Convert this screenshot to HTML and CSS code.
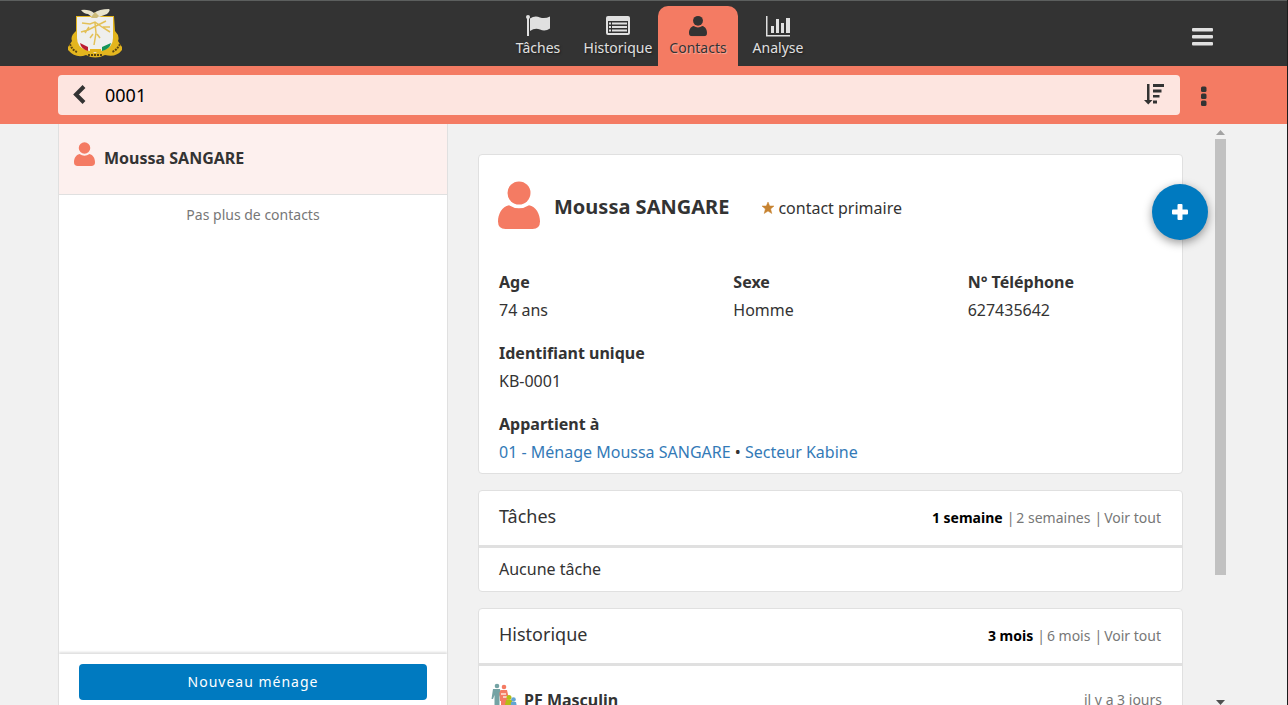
FILE: index.html
```html
<!DOCTYPE html>
<html lang="fr">
<head>
<meta charset="utf-8">
<title>Contacts</title>
<link rel="stylesheet" href="styles.css">
</head>
<body>
<svg class="defs" aria-hidden="true">
  <symbol id="person" viewBox="0 0 42 48">
    <circle cx="21" cy="12" r="11.5"/>
    <path d="M11 24.2Q21 30.5 31 24.2C38 25.5 42 33 42 40.500Q42 48 34.500 48H7.500Q0 48 0 40.500C0 33 4 25.500 11 24.200Z"/>
  </symbol>
</svg>
<header class="topbar">
  <div class="container topbar-inner">
    <a class="logo" href="#" aria-label="Accueil">
      <svg width="56" height="50" viewBox="0 0 56 50">
        <path d="M8 22Q2 27 4 32L0 38V41Q8 50 18 46Q27 51 37 46Q48 49 54 41V38L50 32Q52 27 47 22L46 7H8Z" fill="#e3b51e"/>
        <path d="M9 8H45V29Q45 38 36 41Q30 42 27 44Q24 42 18 41Q9 38 9 29Z" fill="#efefed"/>
        <path d="M13 1Q21 0 26 4Q31 0 41 0Q43 1 39 5L31 8H24L20 5Q16 5 13 1Z" fill="#e8e3cc"/>
        <path d="M24 7L27 3L31 7L29 9H23Z" fill="#cdbb79"/>
        <path d="M14 14L22 15L27 13L34 18L42 23M38 12L30 16L20 21L13 23M27 14L28 24L26 36M35 18L42 18M21 18L17 24M29 25L32 29M25 25L22 29" fill="none" stroke="#e3c057" stroke-width="1.500"/>
        <path d="M12 34L20 38V42Q13 40 12 34Z" fill="#bb1b31"/>
        <path d="M22 40H33V43H22Z" fill="#e5b31b"/>
        <path d="M34 38L43 34Q42 40 34 42Z" fill="#149458"/>
        <path d="M2 35Q4 41 9 43M52 35Q49 41 44 43M20 46H35" fill="none" stroke="#5b4611" stroke-width="2" stroke-dasharray="2 1"/>
      </svg>
    </a>
    <nav class="tabs">
      <a class="tab" href="#">
        <svg width="26" height="22" viewBox="0 0 26 22" fill="currentColor"><circle cx="3" cy="2" r="2"/><path d="M2 2H4V21H2ZM5 3.500Q10 0 15 2.500Q20 4 25 1.500V13.500Q20 17 15 14.500Q10 12.500 5 16Z"/></svg>
        <span>Tâches</span>
      </a>
      <a class="tab" href="#">
        <svg width="26" height="22" viewBox="0 0 26 22" fill="currentColor"><path fill-rule="evenodd" d="M3 1H23Q25 1 25 3V18Q25 20 23 20H3Q1 20 1 18V3Q1 1 3 1ZM3 6V18H23V6Z"/><path d="M4 7.500h2v2H4zM7 7.500h15v2H7zM4 11h2v2H4zM7 11h15v2H7zM4 14.500h2v2H4zM7 14.500h15v2H7z"/></svg>
        <span>Historique</span>
      </a>
      <a class="tab tab-active" href="#" aria-current="page">
        <svg width="18" height="22" viewBox="0 0 42 48" fill="currentColor"><use href="#person"/></svg>
        <span>Contacts</span>
      </a>
      <a class="tab" href="#">
        <svg width="26" height="22" viewBox="0 0 26 22" fill="currentColor"><path d="M1 1H2.500V20H25V21.500H1ZM6 11H9V18H6ZM11 4H14V18H11ZM16 8H19V18H16ZM21 3H25V18H21Z"/></svg>
        <span>Analyse</span>
      </a>
    </nav>
    <button class="icon-button menu" aria-label="Menu">
      <svg width="21" height="19" viewBox="0 0 21 19" fill="currentColor"><rect y="1" width="21" height="3.500" rx="1"/><rect y="8" width="21" height="3.500" rx="1"/><rect y="15" width="21" height="3.500" rx="1"/></svg>
    </button>
  </div>
</header>
<div class="searchbar">
  <div class="container search-inner">
    <form class="search">
      <button class="icon-button" type="button" aria-label="Retour">
        <svg width="14" height="20" viewBox="0 0 14 20"><path d="M11 1.500L3 9.500L11 17.500" fill="none" stroke="currentColor" stroke-width="4"/></svg>
      </button>
      <input class="search-input" type="text" value="0001" aria-label="Rechercher">
      <button class="icon-button" type="button" aria-label="Trier">
        <svg width="20" height="22" viewBox="0 0 20 22" fill="currentColor"><path d="M3 0H5.500V16H8.500L4.250 20.500L0 16H3ZM9 0H20V3H9ZM9 5.500H17.500V8.500H9ZM9 11H15.500V13.500H9ZM9 16.500H13V19.500H9Z"/></svg>
      </button>
    </form>
    <button class="icon-button kebab" aria-label="Plus d'options">
      <svg width="6" height="20" viewBox="0 0 6 20" fill="currentColor"><rect y="0.500" width="5.500" height="5.500" rx="1.500"/><rect y="7.500" width="5.500" height="5.500" rx="1.500"/><rect y="14.500" width="5.500" height="5.500" rx="1.500"/></svg>
    </button>
  </div>
</div>
<main class="container content">
  <aside class="sidebar">
    <a class="contact-row" href="#">
      <svg width="21" height="24" fill="#f47b63"><use href="#person"/></svg>
      <span>Moussa SANGARE</span>
    </a>
    <p class="no-more">Pas plus de contacts</p>
    <div class="sidebar-footer"><button class="primary-button">Nouveau ménage</button></div>
  </aside>
  <section class="detail">
    <div class="detail-scroll">
      <article class="card">
        <div class="profile">
          <svg width="42" height="48" fill="#f47b63"><use href="#person"/></svg>
          <h1>Moussa SANGARE</h1>
          <div class="primary-contact">
            <svg width="12" height="12" viewBox="0 0 12 12"><path d="M6 0L7.700 4H12L8.600 6.900L9.800 11.500L6 9L2.200 11.500L3.400 6.900L0 4H4.300Z" fill="#c78330" stroke="#c78330" stroke-width="0.500"/></svg>
            <span>contact primaire</span>
          </div>
        </div>
        <dl class="fields">
          <div><dt>Age</dt><dd>74 ans</dd></div>
          <div><dt>Sexe</dt><dd>Homme</dd></div>
          <div><dt>N° Téléphone</dt><dd>627435642</dd></div>
          <div class="wide"><dt>Identifiant unique</dt><dd>KB-0001</dd></div>
          <div class="wide"><dt>Appartient à</dt><dd><a href="#">01 - Ménage Moussa SANGARE</a> • <a href="#">Secteur Kabine</a></dd></div>
        </dl>
      </article>
      <article class="card">
        <div class="card-header">
          <h2>Tâches</h2>
          <div class="filters"><a class="selected" href="#">1 semaine</a><a href="#">2 semaines</a><a href="#">Voir tout</a></div>
        </div>
        <p class="empty">Aucune tâche</p>
      </article>
      <article class="card">
        <div class="card-header">
          <h2>Historique</h2>
          <div class="filters"><a class="selected" href="#">3 mois</a><a href="#">6 mois</a><a href="#">Voir tout</a></div>
        </div>
        <a class="report" href="#">
          <svg width="26" height="28" viewBox="0 0 26 28">
            <g fill="#74a3a4"><circle cx="6" cy="3" r="2.300"/><path d="M2 6H9L11 16H9.500L8.500 12V28H3.500V12L2 16H0.500Z"/></g>
            <g fill="#f47b63"><circle cx="13" cy="4" r="2.300"/><path d="M9.500 7H16L18 16L16 17V23H15V28H10V18H9L8.500 10Z"/></g>
            <path d="M10 11H15M12 14H16" stroke="#fbe7dc" stroke-width="1.500"/>
            <g fill="#b4bd16"><circle cx="18" cy="14.500" r="2.500"/><path d="M15 17H21L22 22H20V28H16V22H14Z"/></g>
            <g fill="#64a5d1"><circle cx="22.500" cy="16.500" r="2.300"/><path d="M20 19H25L26 24H24V28H21V24H19.500Z"/></g>
          </svg>
          <strong>PF Masculin</strong>
          <span>il y a 3 jours</span>
        </a>
      </article>
    </div>
    <div class="scrollbar" aria-hidden="true">
      <svg width="9" height="5" viewBox="0 0 9 5"><path d="M0 5L4.500 0L9 5Z" fill="#a3a3a3"/></svg>
      <div class="track"><div class="thumb"></div></div>
      <svg width="9" height="5" viewBox="0 0 9 5"><path d="M0 0H9L4.500 5Z" fill="#505050"/></svg>
    </div>
    <button class="fab" aria-label="Ajouter">
      <svg width="16" height="16" viewBox="0 0 16 16" fill="currentColor"><rect x="5.500" width="5" height="16" rx="1"/><rect y="5.500" width="16" height="5" rx="1"/></svg>
    </button>
  </section>
</main>
</body>
</html>
```
FILE: styles.css
```css
* { box-sizing: border-box; }
body {
  margin: 0;
  height: 100vh;
  display: flex;
  flex-direction: column;
  overflow: hidden;
  background: #f1f1f1;
  color: #333;
  font: 16px/24px "Noto Sans", sans-serif;
}
body::after {
  content: "";
  position: fixed;
  top: 0;
  right: 0;
  bottom: 0;
  width: 1px;
  background: #1c1c1c;
}
h1, h2, p, dl, dd { margin: 0; }
a { text-decoration: none; color: inherit; }
button, input { font: inherit; color: inherit; }
svg { display: block; flex: none; }
.defs { position: absolute; width: 0; height: 0; }
.container { margin: 0 60px 0 58px; }
.icon-button { border: 0; padding: 0; background: none; cursor: pointer; }

.topbar { background: #333; border-top: 1px solid #5c5f5e; }
.topbar-inner {
  display: grid;
  grid-template-columns: 1fr auto 1fr;
  align-items: center;
  height: 65px;
}
.logo { padding-left: 10px; justify-self: start; }
.tabs { display: flex; align-self: end; margin-left: 30px; }
.tab {
  display: flex;
  flex-direction: column;
  align-items: center;
  width: 80px;
  height: 60px;
  padding-top: 9px;
  gap: 1px;
  border-radius: 10px 10px 0 0;
  color: #e0e0e0;
  font-size: 14px;
  line-height: 20px;
  text-shadow: 1px 1px 2px rgba(0, 0, 0, .5);
}
.tab-active {
  background: #f47b63;
  color: #333;
  text-shadow: 1px 1px 1px rgba(255, 255, 255, .4);
}
.menu { justify-self: end; margin-right: 15px; padding-top: 6px; color: #e0e0e0; }

.searchbar { background: #f47b63; }
.search-inner { display: flex; align-items: center; height: 58px; }
.search {
  flex: 1;
  display: flex;
  align-items: center;
  height: 40px;
  padding: 0 16px 0 15px;
  border-radius: 4px;
  background: #fde5e0;
}
.search-input {
  flex: 1;
  min-width: 0;
  height: 40px;
  padding: 0 18px;
  border: 0;
  outline: 0;
  background: none;
  color: #000;
  font-size: 18px;
}
.kebab { margin: 0 21px; padding-top: 1px; }

.content { flex: 1; min-height: 0; display: grid; grid-template-columns: 1fr 2fr; }
.sidebar {
  display: flex;
  flex-direction: column;
  min-height: 0;
  background: #fff;
  border: 1px solid #e0e0e0;
  border-width: 0 1px;
}
.contact-row {
  display: flex;
  align-items: flex-start;
  gap: 9px;
  padding: 18px 15px 25px;
  border-bottom: 1px solid #e0e0e0;
  background: #fdf0ee;
  font-weight: bold;
}
.contact-row span { padding-top: 6px; line-height: 21px; }
.no-more { flex: 1; padding-top: 10px; text-align: center; color: #777; font-size: 14px; line-height: 20px; }
.sidebar-footer { padding: 10px 20px 5px; box-shadow: 0 -2px 2px #e0e0e0; }
.primary-button {
  width: 100%;
  height: 36px;
  border: 0;
  border-radius: 4px;
  background: #007ac0;
  color: #fff;
  font-size: 14px;
  letter-spacing: 1px;
}

.detail { position: relative; display: flex; min-width: 0; min-height: 0; }
.detail-scroll {
  flex: 1;
  display: flex;
  flex-direction: column;
  gap: 16px;
  padding: 30px;
  overflow: hidden;
}
.card { flex: none; background: #fff; border: 1px solid #e0e0e0; border-radius: 4px; }
.profile { display: flex; align-items: center; padding: 26px 19px 39px; }
.profile h1 { margin-left: 14px; padding-top: 4px; font-size: 20px; line-height: 28px; }
.primary-contact { display: flex; align-items: center; gap: 4px; margin-left: 33px; padding-top: 6px; }
.fields { display: grid; grid-template-columns: repeat(3, 1fr); row-gap: 15px; padding-bottom: 7px; line-height: 28px; }
.fields div { padding-left: 20px; }
.fields .wide { grid-column: 1 / -1; }
.fields dt { font-weight: bold; }
.fields a { color: #337ab7; }
.card-header {
  display: flex;
  align-items: center;
  justify-content: space-between;
  height: 57px;
  padding: 0 21px 0 20px;
  border-bottom: 3px solid #e0e0e0;
}
.card-header h2 { padding-bottom: 4px; font-size: 18px; font-weight: normal; line-height: 26px; }
.filters { display: flex; font-size: 14px; line-height: 20px; color: #777; }
.filters a + a::before { content: "|"; margin: 0 2px 0 4px; }
.filters .selected { color: #000; font-weight: bold; }
.empty { padding: 9px 20px 10px; }
.report { display: flex; gap: 7px; padding: 17px 20px 16px 12px; }
.report strong { flex: 1; padding-top: 5px; }
.report span { padding-top: 5px; font-size: 14px; color: #777; }

.scrollbar { display: flex; flex-direction: column; align-items: center; width: 15px; padding: 6px 0 0; }
.track { flex: 1; width: 11px; padding: 4px 0 2px; }
.thumb { height: 78%; background: #c1c1c1; }
.fab {
  position: absolute;
  top: 60px;
  right: 20px;
  display: grid;
  place-items: center;
  width: 56px;
  height: 56px;
  border: 0;
  border-radius: 50%;
  background: #007ac0;
  color: #fff;
  box-shadow: 0 3px 10px rgba(0, 0, 0, .4);
}
```
